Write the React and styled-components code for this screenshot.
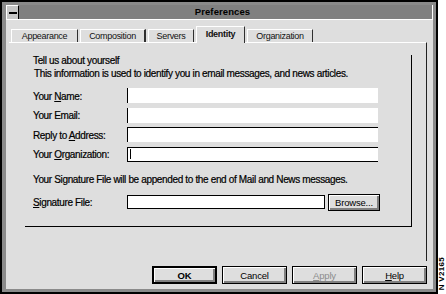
import React from 'react';
import styled, { createGlobalStyle } from 'styled-components';

const Global = createGlobalStyle`
  html, body { margin: 0; padding: 0; background: #fff; }
  body {
    font-family: "Liberation Sans", Arial, sans-serif;
    font-size: 10px;
    color: #000;
    -webkit-font-smoothing: none;
  }
  #root { width: 446px; height: 294px; }
`;

const Page = styled.div`
  display: flex;
  width: 446px;
  height: 294px;
  overflow: hidden;
`;

const Window = styled.div`
  width: 438px;
  height: 294px;
  box-sizing: border-box;
  border: 2px solid #000;
  background: #8a8a8a;
  padding: 3px 3px 3px 4px;
  display: flex;
  flex-direction: column;
`;

const TitleBar = styled.div`
  height: 15px;
  box-sizing: border-box;
  display: flex;
  background: #808080;
  border-bottom: 1px solid #fff;
  border-right: 1px solid #fff;
`;

const SysMenu = styled.div`
  width: 13px;
  box-sizing: border-box;
  background: #c8c8c8;
  border-top: 1px solid #fff;
  border-left: 1px solid #fff;
  border-right: 1px solid #000;
  display: flex;
  align-items: center;
  justify-content: center;
  &::before {
    content: '';
    width: 8px;
    height: 2px;
    background: #000;
  }
`;

const Title = styled.div`
  flex: 1;
  text-align: center;
  font-weight: bold;
  font-size: 9.5px;
  line-height: 14px;
  letter-spacing: 0.1px;
  padding-right: 6px;
`;

const Body = styled.div`
  flex: 1;
  background: #dedede;
  display: flex;
  flex-direction: column;
  padding-top: 5px;
`;

const TabRow = styled.div`
  height: 17px;
  display: flex;
  align-items: flex-end;
  padding-left: 5px;
  gap: 2px;
  position: relative;
  z-index: 1;
`;

const Tab = styled.div`
  width: ${p => p.$w}px;
  height: ${p => (p.$active ? 17 : 13)}px;
  margin-bottom: ${p => (p.$active ? -1 : 0)}px;
  box-sizing: border-box;
  border-top: 1px solid #fff;
  border-left: 1px solid #fff;
  border-right: ${p => (p.$thick ? 2 : 1)}px solid #303030;
  background: #dedede;
  text-align: center;
  font-size: 9px;
  letter-spacing: -0.3px;
  line-height: ${p => (p.$active ? 14 : 12)}px;
  font-weight: ${p => (p.$active ? 'bold' : 'normal')};
  color: #111;
`;

const Panel = styled.div`
  height: 219px;
  box-sizing: border-box;
  margin: 0 6px 0 3px;
  border-top: 1px solid #fff;
  border-right: 1px solid #202020;
`;

const Group = styled.div`
  margin: 15px 0 0 16px;
  width: 387px;
  height: 172px;
  box-sizing: border-box;
  border-right: 1px solid #000;
  border-bottom: 1px solid #000;
  padding-left: 8px;
  letter-spacing: -0.35px;
  -webkit-text-stroke: 0.2px #000;
`;

const Line = styled.div`
  line-height: 12px;
  margin-top: ${p => p.$mt || 0}px;
  padding-left: ${p => p.$pl || 0}px;
`;

const FormGrid = styled.div`
  margin-top: 8px;
  display: grid;
  grid-template-columns: 94px 251px;
  grid-auto-rows: 15px;
  row-gap: 4.5px;
  align-items: center;
`;

const Label = styled.div`
  line-height: 12px;
  padding-top: 2px;
`;

const Field = styled.div`
  height: ${p => p.$h || 15}px;
  box-sizing: border-box;
  background: #fff;
  border-left: 1px solid #000;
  border-top: ${p => (p.$top ? '1px solid #000' : 'none')};
  border-bottom: ${p => (p.$bottom ? '1px solid #000' : 'none')};
  display: flex;
  align-items: center;
  padding-left: 2px;
`;

const Caret = styled.span`
  width: 1px;
  height: 10px;
  background: #000;
`;

const SigRow = styled.div`
  margin-top: 8px;
  display: flex;
  align-items: center;
  height: 17px;
`;

const SigLabel = styled.div`
  width: 94px;
  line-height: 12px;
  padding-top: 2px;
`;

const SigField = styled(Field)`
  width: 198px;
  border: 1px solid #000;
  margin-right: 3px;
`;

const Button = styled.div`
  width: ${p => p.$w || 65}px;
  height: ${p => p.$h || 18}px;
  box-sizing: border-box;
  border: ${p => (p.$default ? 2 : 1)}px solid #000;
  background: #dedede;
  box-shadow: inset 1px 1px 0 #fff, inset -2px -2px 0 #808080;
  display: flex;
  align-items: center;
  justify-content: center;
  font-size: 9.5px;
  letter-spacing: -0.2px;
  -webkit-text-stroke: 0;
  color: ${p => (p.$disabled ? '#8c8c8c' : '#000')};
  font-weight: ${p => (p.$bold ? 'bold' : 'normal')};
`;

const ButtonRow = styled.div`
  margin: 5px 6px 0 0;
  display: flex;
  justify-content: flex-end;
  gap: 5px;
`;

const Strip = styled.div`
  width: 8px;
  height: 294px;
  background: #fff;
  display: flex;
  align-items: flex-end;
  justify-content: center;
`;

const StripText = styled.div`
  writing-mode: vertical-rl;
  transform: rotate(180deg);
  font-size: 8px;
  font-weight: bold;
  letter-spacing: 0.3px;
  line-height: 8px;
  margin-bottom: 4px;
`;

const U = styled.span`
  text-decoration: underline;
`;

const tabs = [
  { label: 'Appearance', w: 67 },
  { label: 'Composition', w: 66, thick: true },
  { label: 'Servers', w: 46 },
  { label: 'Identity', w: 49, active: true },
  { label: 'Organization', w: 66 },
];

export default function App() {
  return (
    <Page>
      <Global />
      <Window>
        <TitleBar>
          <SysMenu />
          <Title>Preferences</Title>
        </TitleBar>
        <Body>
          <TabRow>
            {tabs.map(t => (
              <Tab key={t.label} $w={t.w} $active={t.active} $thick={t.thick}>
                {t.label}
              </Tab>
            ))}
          </TabRow>
          <Panel>
            <Group>
              <Line $mt={-3}>Tell us about yourself</Line>
              <Line $mt={1} $pl={1}>
                This information is used to identify you in email messages, and news articles.
              </Line>
              <FormGrid>
                <Label>Your <U>N</U>ame:</Label>
                <Field />
                <Label>Your Email:</Label>
                <Field />
                <Label>Reply to <U>A</U>ddress:</Label>
                <Field $top />
                <Label>Your <U>O</U>rganization:</Label>
                <Field $top $bottom>
                  <Caret />
                </Field>
              </FormGrid>
              <Line $mt={12}>
                Your Signature File will be appended to the end of Mail and News messages.
              </Line>
              <SigRow>
                <SigLabel><U>S</U>ignature File:</SigLabel>
                <SigField $h={14} />
                <Button $w={52} $h={17}>Browse...</Button>
              </SigRow>
            </Group>
          </Panel>
          <ButtonRow>
            <Button $default $bold>OK</Button>
            <Button>Cancel</Button>
            <Button $disabled><span><U>A</U>pply</span></Button>
            <Button><span><U>H</U>elp</span></Button>
          </ButtonRow>
        </Body>
      </Window>
      <Strip>
        <StripText>N V2165</StripText>
      </Strip>
    </Page>
  );
}
